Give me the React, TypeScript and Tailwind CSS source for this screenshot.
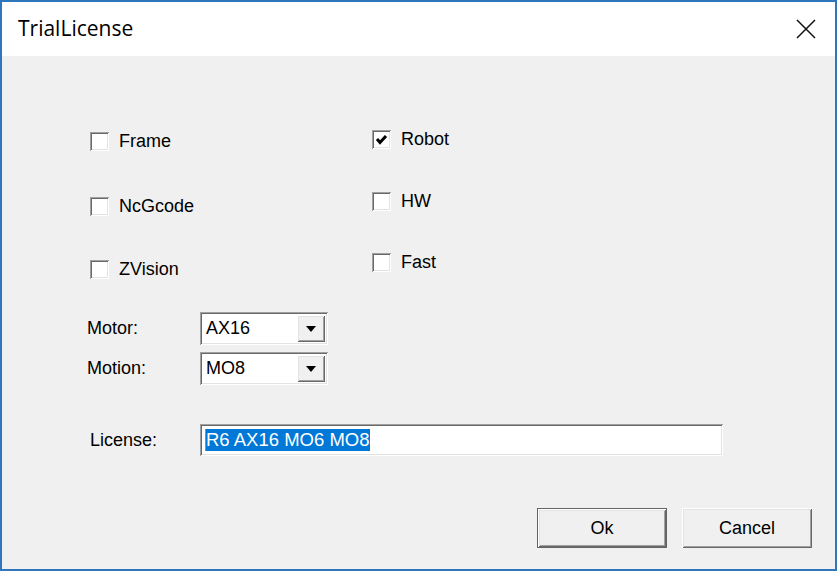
import React from "react";

const raised =
  "shadow-[inset_1px_1px_0_#ffffff,inset_-1px_-1px_0_#696969,inset_2px_2px_0_#e3e3e3,inset_-2px_-2px_0_#a0a0a0]";
const sunken =
  "shadow-[inset_1px_1px_0_#a0a0a0,inset_-1px_-1px_0_#ffffff,inset_2px_2px_0_#696969,inset_-2px_-2px_0_#e3e3e3]";

function CheckBox({ label, checked, mt }: { label: string; checked?: boolean; mt: string }) {
  return (
    <div className={`flex h-[19px] items-center ${mt}`}>
      <div className={`flex h-[19px] w-[19px] items-center justify-center bg-white ${sunken}`}>
        {checked && (
          <svg width="13" height="13" viewBox="0 0 13 13">
            <path d="M2 6 L5 9.5 L11 3" fill="none" stroke="#000" strokeWidth="3" />
          </svg>
        )}
      </div>
      <span className="ml-[10px]">{label}</span>
    </div>
  );
}

function Combo({ value }: { value: string }) {
  return (
    <div className={`flex h-[33px] w-[128px] items-center justify-between bg-white pl-[6px] pr-[3px] ${sunken}`}>
      <span>{value}</span>
      <div className={`flex h-[27px] w-[28px] items-center justify-center bg-[#f0f0f0] ${raised}`}>
        <svg width="10" height="6" viewBox="0 0 10 6">
          <path d="M0 0 H10 L5 6 Z" fill="#000" />
        </svg>
      </div>
    </div>
  );
}

export default function App() {
  return (
    <div
      className="flex h-[571px] w-[837px] flex-col border-2 border-[#2f76bd] bg-[#f0f0f0] text-[18px] text-black"
      style={{ fontFamily: '"Liberation Sans", Arial, sans-serif' }}
    >
      <div className="flex h-[54px] items-center justify-between bg-white pl-[16px] pr-[19px]">
        <span className="text-[21px]" style={{ fontFamily: '"Open Sans", "Noto Sans", sans-serif' }}>
          TrialLicense
        </span>
        <svg width="20" height="20" viewBox="0 0 20 20">
          <path d="M1 1 L19 19 M19 1 L1 19" stroke="#111" strokeWidth="1.5" />
        </svg>
      </div>

      <div className="flex flex-col">
        <div className="flex pl-[88px]">
          <div className="flex w-[282px] flex-col pt-[76px]">
            <CheckBox label="Frame" mt="" />
            <CheckBox label="NcGcode" mt="mt-[46px]" />
            <CheckBox label="ZVision" mt="mt-[44px]" />
          </div>
          <div className="flex flex-col pt-[74px]">
            <CheckBox label="Robot" checked mt="" />
            <CheckBox label="HW" mt="mt-[43px]" />
            <CheckBox label="Fast" mt="mt-[42px]" />
          </div>
        </div>

        <div className="mt-[33px] flex flex-col pl-[85px]">
          <div className="flex items-center">
            <span className="w-[113px]">Motor:</span>
            <Combo value="AX16" />
          </div>
          <div className="mt-[7px] flex items-center">
            <span className="w-[113px]">Motion:</span>
            <Combo value="MO8" />
          </div>
        </div>

        <div className="mt-[39px] flex items-center pl-[88px]">
          <span className="w-[110px]">License:</span>
          <div className={`flex h-[32px] w-[523px] items-center bg-white pl-[5px] ${sunken}`}>
            <span className="border-l border-[#d08040] bg-[#0078d7] pr-[1px] text-[18.5px] leading-[22px] text-white">
              R6 AX16 MO6 MO8
            </span>
          </div>
        </div>

        <div className="mt-[52px] flex justify-end gap-[15px] pr-[23px]">
          <button
            type="button"
            className={`h-[40px] w-[130px] border border-[#646464] bg-[#f0f0f0] ${raised}`}
          >
            Ok
          </button>
          <button type="button" className={`h-[40px] w-[130px] bg-[#f0f0f0] ${raised}`}>
            Cancel
          </button>
        </div>
      </div>
    </div>
  );
}
